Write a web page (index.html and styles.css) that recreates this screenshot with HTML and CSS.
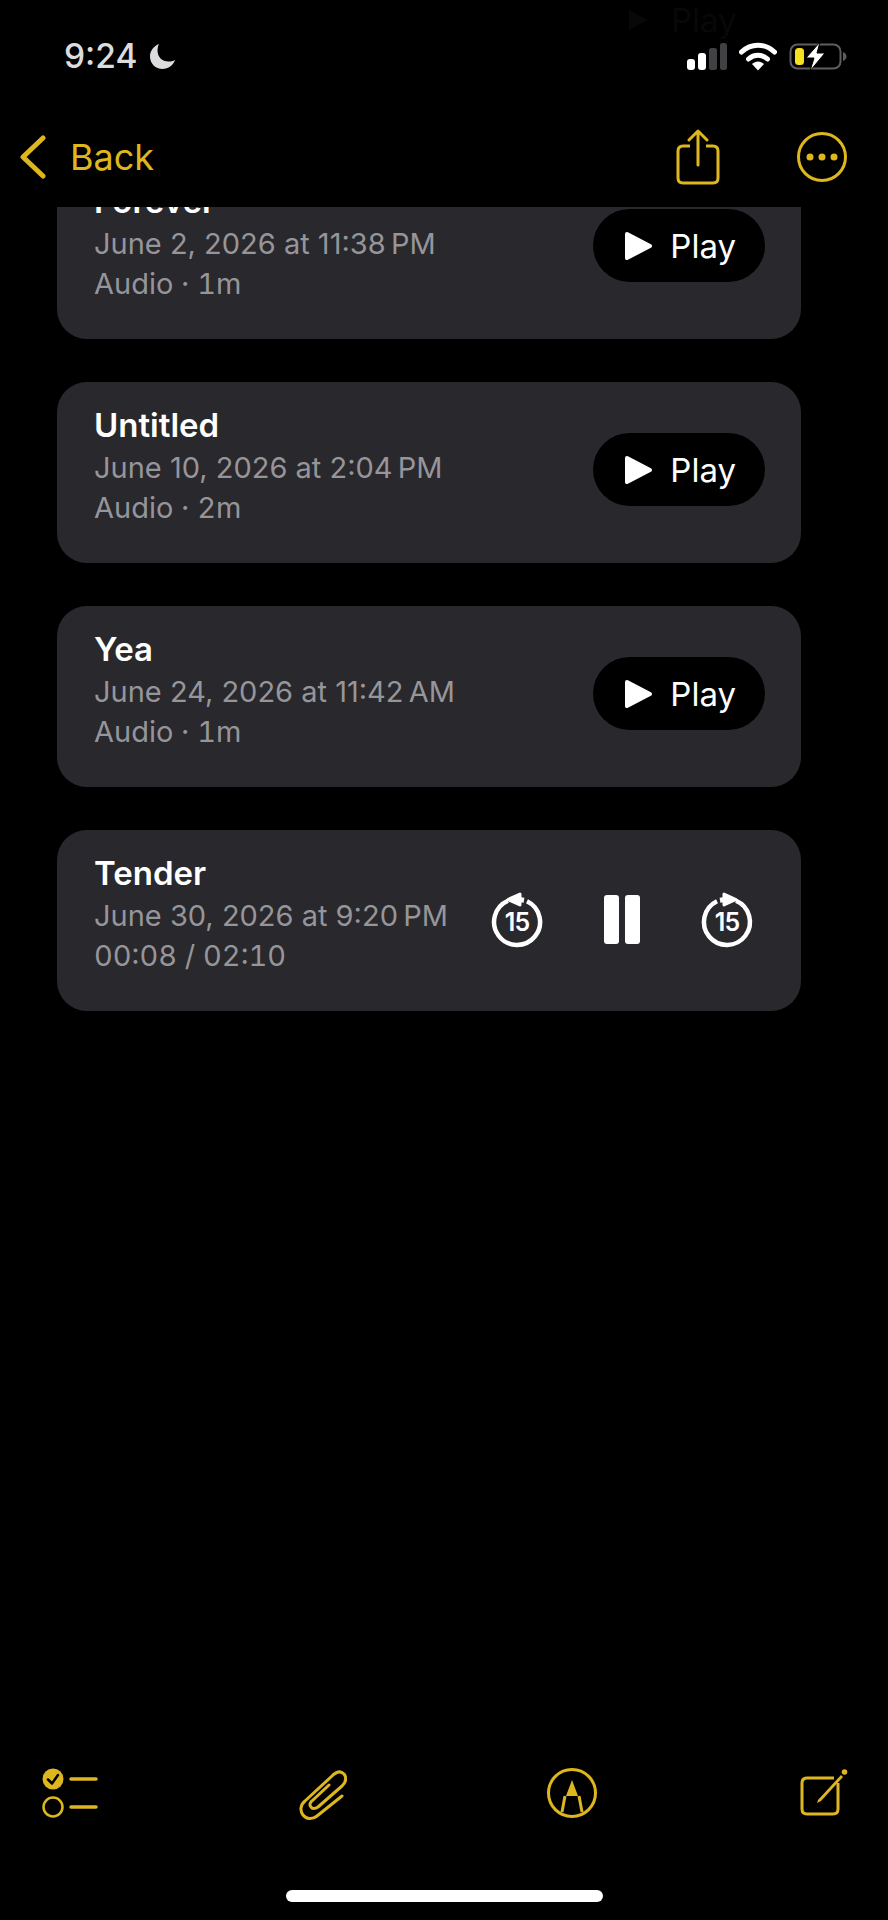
FILE: index.html
```html
<!DOCTYPE html>
<html lang="en">
<head>
  <meta charset="UTF-8">
  <meta name="viewport" content="width=device-width, initial-scale=1.0">
  <title>Note</title>
  <link rel="stylesheet" href="styles.css">
</head>
<body>
  <div class="ghost">
    <svg width="23" height="22" viewBox="0 0 23 22"><path d="M2 1 L21 11 L2 21 Z" fill="#080808"/></svg>
    <span>Play</span>
  </div>

  <div class="status-bar">
    <div class="status-left">
      <span class="time">9:24</span>
      <svg class="moon" width="27" height="27" viewBox="0 0 27 27"><path d="M10 1 C5 3 1 7.5 1 13.5 C1 20.5 6.5 26 13.5 26 C19.5 26 24 22.500 26 17 C24 18 22 18.500 19.500 18.500 C13 18.500 8.500 14 8.500 7.500 C8.500 5.500 9 3 10 1 Z" fill="#dcdcdf"/></svg>
    </div>
    <div class="status-right">
      <svg width="40" height="27" viewBox="0 0 40 27">
        <rect x="0" y="16" width="8" height="11" rx="3" fill="#fff"/>
        <rect x="11" y="10" width="8" height="17" rx="3" fill="#fff"/>
        <rect x="22" y="5" width="8" height="22" rx="2.500" fill="#414143"/>
        <rect x="33" y="0" width="7" height="27" rx="2.500" fill="#414143"/>
      </svg>
      <svg width="38" height="29" viewBox="0 0 38 29">
        <path d="M2.500 10 C12 1 26 1 35.500 10" fill="none" stroke="#fff" stroke-width="5" stroke-linecap="round"/>
        <path d="M9.500 17 C15 12 23 12 28.500 17" fill="none" stroke="#fff" stroke-width="5" stroke-linecap="round"/>
        <path d="M13 22 C16.500 18.500 21.500 18.500 25 22 L19 28.500 Z" fill="#fff"/>
      </svg>
      <svg width="58" height="29" viewBox="0 0 58 29">
        <rect x="1.500" y="2.500" width="50" height="24" rx="7" fill="none" stroke="#5e5e60" stroke-width="2"/>
        <path d="M54 10 C56 10.500 57.500 12.500 57.500 14.500 C57.500 16.500 56 18.500 54 19 Z" fill="#5e5e60"/>
        <rect x="6" y="6" width="9" height="17" rx="3.500" fill="#f7e01d"/>
        <path d="M31 0 L17 16 L25 16 L21 29 L36 11 L28 11 Z" fill="#fff" stroke="#000" stroke-width="1"/>
      </svg>
    </div>
  </div>

  <div class="nav-bar">
    <div class="back">
      <svg width="28" height="44" viewBox="0 0 28 44"><path d="M24 3 L4 22 L24 41" fill="none" stroke="#deb71e" stroke-width="5" stroke-linecap="round" stroke-linejoin="round"/></svg>
      <span>Back</span>
    </div>
    <div class="nav-actions">
      <svg width="44" height="56" viewBox="0 0 44 56">
        <path d="M14 17 L7 17 Q2 17 2 22 L2 49 Q2 54 7 54 L37 54 Q42 54 42 49 L42 22 Q42 17 37 17 L30 17" fill="none" stroke="#deb71e" stroke-width="3"/>
        <path d="M22 36 L22 2 M13 11 L22 2 L31 11" fill="none" stroke="#deb71e" stroke-width="3" stroke-linecap="round" stroke-linejoin="round"/>
      </svg>
      <svg width="50" height="50" viewBox="0 0 50 50">
        <circle cx="25" cy="25" r="23.500" fill="none" stroke="#deb71e" stroke-width="3"/>
        <circle cx="13" cy="25" r="3.500" fill="#deb71e"/>
        <circle cx="25" cy="25" r="3.500" fill="#deb71e"/>
        <circle cx="37" cy="25" r="3.500" fill="#deb71e"/>
      </svg>
    </div>
  </div>

  <div class="scroller">
    <div class="list">
      <div class="card">
        <div class="info">
          <div class="title">Forever</div>
          <div class="meta">June 2, 2026 at 11:38&#8239;PM</div>
          <div class="meta detail">Audio · 1m</div>
        </div>
        <div class="play-btn">
          <svg width="30" height="30" viewBox="0 0 30 30"><path d="M4 3 L27 15 L4 27 Z" fill="#fff" stroke="#fff" stroke-width="4" stroke-linejoin="round"/></svg>
          <span>Play</span>
        </div>
      </div>
      <div class="card">
        <div class="info">
          <div class="title">Untitled</div>
          <div class="meta">June 10, 2026 at 2:04&#8239;PM</div>
          <div class="meta detail">Audio · 2m</div>
        </div>
        <div class="play-btn">
          <svg width="30" height="30" viewBox="0 0 30 30"><path d="M4 3 L27 15 L4 27 Z" fill="#fff" stroke="#fff" stroke-width="4" stroke-linejoin="round"/></svg>
          <span>Play</span>
        </div>
      </div>
      <div class="card">
        <div class="info">
          <div class="title">Yea</div>
          <div class="meta">June 24, 2026 at 11:42&#8239;AM</div>
          <div class="meta detail">Audio · 1m</div>
        </div>
        <div class="play-btn">
          <svg width="30" height="30" viewBox="0 0 30 30"><path d="M4 3 L27 15 L4 27 Z" fill="#fff" stroke="#fff" stroke-width="4" stroke-linejoin="round"/></svg>
          <span>Play</span>
        </div>
      </div>
      <div class="card">
        <div class="info">
          <div class="title">Tender</div>
          <div class="meta">June 30, 2026 at 9:20&#8239;PM</div>
          <div class="meta detail">00:08 / 02:10</div>
        </div>
        <div class="controls">
          <svg width="60" height="60" viewBox="0 0 60 60">
            <path d="M40 9.200 A23 23 0 1 1 21 8.800" fill="none" stroke="#fff" stroke-width="4.500"/>
            <path d="M33 2 L21 7.500 L33 13 Z" fill="#fff" stroke="#fff" stroke-width="3" stroke-linejoin="round"/>
            <path d="M32 7.500 L37 8.300" fill="none" stroke="#fff" stroke-width="5"/>
            <text class="skip-num" x="30" y="39" text-anchor="middle">15</text>
          </svg>
          <svg width="60" height="60" viewBox="0 0 60 60">
            <rect x="12" y="3" width="15" height="49" rx="3" fill="#fff"/>
            <rect x="33" y="3" width="15" height="49" rx="3" fill="#fff"/>
          </svg>
          <svg width="60" height="60" viewBox="0 0 60 60">
            <path d="M20 9.200 A23 23 0 1 0 39 8.800" fill="none" stroke="#fff" stroke-width="4.500"/>
            <path d="M27 2 L39 7.500 L27 13 Z" fill="#fff" stroke="#fff" stroke-width="3" stroke-linejoin="round"/>
            <path d="M28 7.500 L23 8.300" fill="none" stroke="#fff" stroke-width="5"/>
            <text class="skip-num" x="30" y="39" text-anchor="middle">15</text>
          </svg>
        </div>
      </div>
    </div>
  </div>

  <div class="toolbar">
    <svg width="56" height="52" viewBox="0 0 56 52">
      <circle cx="11" cy="11" r="10.500" fill="#deb71e"/>
      <path d="M6 11.500 L10 15.500 L16 7" fill="none" stroke="#000" stroke-width="2.500" stroke-linecap="round" stroke-linejoin="round"/>
      <circle cx="11" cy="39" r="9.500" fill="none" stroke="#deb71e" stroke-width="2.500"/>
      <path d="M29 11 L54 11 M29 39 L54 39" stroke="#deb71e" stroke-width="3.500" stroke-linecap="round"/>
    </svg>
    <svg width="48" height="54" viewBox="0 0 48 54">
      <path d="M43 28 L18 48 C13 52 7 51 4 47 C1 43 1 37 6 33 L33 8 C37 4 41 2 45 6 C48 10 47 14 43 18 L19 39 C16 41 13 41 12 39 C10 37 11 34 14 32 L30 17" fill="none" stroke="#deb71e" stroke-width="3" stroke-linecap="round" stroke-linejoin="round"/>
    </svg>
    <svg width="50" height="50" viewBox="0 0 50 50">
      <circle cx="25" cy="25" r="23.500" fill="none" stroke="#deb71e" stroke-width="3"/>
      <path d="M25 12 L31 28 L19 28 Z" fill="#deb71e"/>
      <path d="M18 28 L15 44 M32 28 L35 44" stroke="#deb71e" stroke-width="3" fill="none"/>
    </svg>
    <svg width="50" height="50" viewBox="0 0 50 50">
      <path d="M40 15 L40 41 Q40 46 35 46 L9 46 Q4 46 4 41 L4 15 Q4 10 9 10 L36 10" fill="none" stroke="#deb71e" stroke-width="3"/>
      <path d="M20 32 L43 7 L45 9 L23 33 L19 35 Z" fill="#deb71e"/>
      <circle cx="46.500" cy="4" r="2.800" fill="#deb71e"/>
    </svg>
  </div>
  <div class="home-indicator"></div>
</body>
</html>
```

FILE: styles.css
```css
html, body { margin: 0; padding: 0; height: 100%; }
body { position: relative; display: flex; flex-direction: column; height: 1920px; overflow: hidden; background: #000; color: #fff; font-family: Inter, "Liberation Sans", sans-serif; }
svg { display: block; flex: none; }

.ghost { position: absolute; top: 0; left: 627px; display: flex; align-items: center; gap: 21px; font-size: 33px; color: #080808; }

.status-bar { display: flex; align-items: center; justify-content: space-between; height: 112px; flex: none; padding: 0 41px 0 64px; box-sizing: border-box; }
.status-left { display: flex; align-items: center; gap: 12px; }
.time { font-size: 33.5px; font-weight: 500; color: #dcdcdf; line-height: 40px; }
.status-right { display: flex; align-items: center; gap: 12px; }

.nav-bar { display: flex; align-items: center; justify-content: space-between; height: 90px; flex: none; margin-bottom: 5px; padding: 0 41px 0 19px; color: #deb71e; }
.back { display: flex; align-items: center; gap: 23px; font-size: 36px; }
.nav-actions { display: flex; align-items: center; gap: 77px; }

.scroller { flex: 1; overflow: hidden; }
.list { display: flex; flex-direction: column; gap: 43px; margin: -49px 87px 0 57px; }
.card { display: flex; justify-content: space-between; align-items: flex-start; height: 181px; box-sizing: border-box; padding: 23px 36px 0 37px; background: #29282c; border-radius: 30px; }
.title { font-size: 33px; font-weight: 600; line-height: 40px; margin-bottom: 3px; color: #fff; }
.meta { font-size: 29px; line-height: 40px; color: #96959a; }
.detail { font-variant-numeric: tabular-nums; }

.play-btn { display: flex; align-items: center; gap: 17px; height: 73px; margin-top: 28px; padding: 0 29px 0 30px; background: #000; border-radius: 37px; font-size: 33px; color: #fff; }

.controls { display: flex; align-items: center; gap: 45px; margin-top: 39px; margin-right: 8px; }
.skip-num { font-family: Inter, "Liberation Sans", sans-serif; font-size: 25px; font-weight: 600; letter-spacing: -1px; fill: #fff; }

.toolbar { display: flex; align-items: flex-start; justify-content: space-between; flex: none; padding: 0 40px 0 42px; }
.home-indicator { flex: none; width: 317px; height: 12px; margin: 68px auto 18px; background: #fff; border-radius: 6px; }
```
